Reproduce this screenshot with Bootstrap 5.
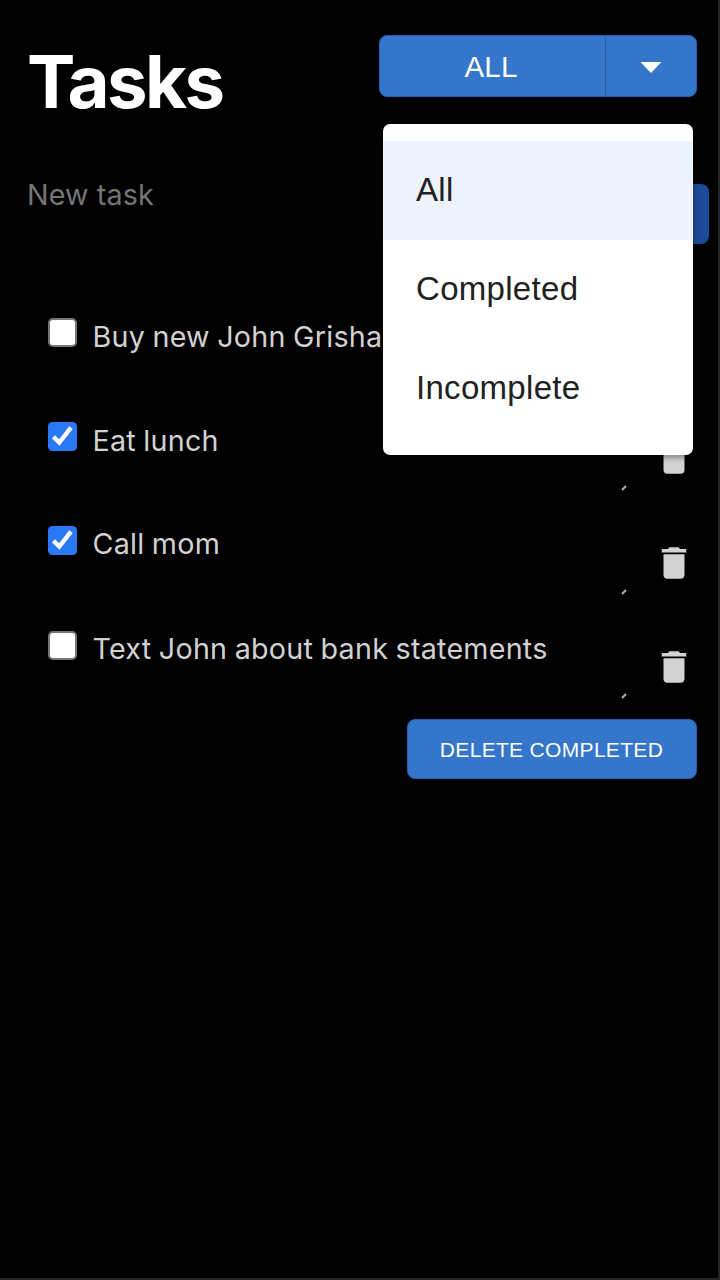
<!DOCTYPE html>
<html lang="en">
<head>
<meta charset="utf-8">
<meta name="viewport" content="width=device-width, initial-scale=1">
<title>Tasks</title>
<link href="https://cdn.jsdelivr.net/npm/bootstrap@5.3.0/dist/css/bootstrap.min.css" rel="stylesheet">
<style>
  body { background: #000; font-family: Inter, "Liberation Sans", sans-serif; }
  .app { height: 1280px; background: #000; border-right: 2px solid #242428; border-bottom: 2px solid #242428; }
  .app-head { height: 160px; padding: 35px 21px 0 27px; }
  .app-title { font-size: 72.5px; font-weight: 650; line-height: 94px; letter-spacing: -2.6px; color: #fff; }
  .btn-task { --bs-btn-color: #fff; --bs-btn-bg: #3575ca; --bs-btn-border-color: #255db2;
    --bs-btn-hover-color: #fff; --bs-btn-hover-bg: #2c67b8; --bs-btn-border-radius: 8px;
    font-family: "Liberation Sans", sans-serif; }
  .filter { width: 318.5px; height: 62px; }
  .filter .btn { font-size: 29.5px; line-height: 1; padding: 1px 2px 0 0; letter-spacing: .1px; }
  .filter .caret-btn.btn { flex: 0 0 92.5px; padding: 2px 0 0 1px; border-radius: 0 8px 8px 0 !important; }
  .filter-menu { display: block; width: 310px; height: 331px; top: 89px; left: 4.5px; padding: 17px 0 0;
    border: 0; border-radius: 7px; background: #fff; box-shadow: 0 3px 5px rgba(0,0,0,.35);
    font-family: "Liberation Sans", sans-serif; overflow: hidden; }
  .filter-menu .dropdown-item { height: 99px; padding: 0 33px; font-size: 33px; line-height: 98px; letter-spacing: .3px; color: #212121; }
  .filter-menu .dropdown-item.active { background: #edf2fb; color: #212121; }
  .new-task { height: 140px; padding: 24px 9px 0 27px; }
  .new-label { font-size: 28.7px; line-height: 22px; letter-spacing: .12px; color: #757575; }
  .add-btn { width: 130px; height: 60px; border: 0; --bs-btn-bg: #1c4998; }
  .task-row { height: 104.2px; padding: 18px 22px 0 47.5px; }
  .check { width: 29px; height: 29px; margin-right: 16px; }
  .task-text { position: relative; width: 536px; height: 73px; font-size: 28.7px; line-height: 37px; letter-spacing: .24px; word-spacing: -.9px; color: #d2d2d2; white-space: nowrap; }
  .task-row:nth-child(n+3) .task-text { line-height: 35.5px; }
  .grip { position: absolute; right: 1.5px; bottom: 4.5px; width: 6px; height: 6px; }
  .trash { width: 42px; height: 42px; margin: 15.2px 0 0 24px; fill: #d2d2d2; }
  .delete-btn { width: 290px; height: 60px; margin: 2.2px 21px 0 0; padding: 2px 1px 0 0; font-size: 21px; letter-spacing: .32px; }
</style>
</head>
<body>
<main class="app d-flex flex-column overflow-hidden">
  <header class="app-head d-flex justify-content-between align-items-start">
    <h1 class="app-title m-0">Tasks</h1>
    <div class="filter btn-group dropdown">
      <button class="btn btn-task flex-grow-1" type="button">ALL</button>
      <button class="btn btn-task caret-btn" type="button" aria-label="Choose filter">
        <svg class="d-block mx-auto" width="22" height="11" viewBox="0 0 22 11"><path d="M.5 0h21L11 11z" fill="#fff"/></svg>
      </button>
      <div class="filter-menu dropdown-menu">
        <a class="dropdown-item active" href="#">All</a>
        <a class="dropdown-item" href="#">Completed</a>
        <a class="dropdown-item" href="#">Incomplete</a>
      </div>
    </div>
  </header>

  <form class="new-task d-flex justify-content-between">
    <span class="new-label">New task</span>
    <button class="add-btn btn btn-task" type="button" aria-label="Add"></button>
  </form>

  <section>
    <div class="task-row d-flex align-items-start">
      <svg class="check" viewBox="0 0 29 29"><rect x="1" y="1" width="27" height="27" rx="4" fill="#fff" stroke="#767676" stroke-width="2"/></svg>
      <div class="task-text">Buy new John Grisham book<svg class="grip" viewBox="0 0 6 6"><path d="M1 5l4-4" stroke="#b0b0b0" stroke-width="2"/></svg></div>
      <svg class="trash" viewBox="0 0 24 24"><path d="M6 19c0 1.1.9 2 2 2h8c1.1 0 2-.9 2-2V7H6v12zM19 4h-3.500l-1-1h-5l-1 1H5v2h14V4z"/></svg>
    </div>
    <div class="task-row d-flex align-items-start">
      <svg class="check" viewBox="0 0 29 29"><rect width="29" height="29" rx="4.500" fill="#2b78f6"/><path d="M5.500 14.700l5.800 5.800L23 5.700" fill="none" stroke="#fff" stroke-width="4.400"/></svg>
      <div class="task-text">Eat lunch<svg class="grip" viewBox="0 0 6 6"><path d="M1 5l4-4" stroke="#b0b0b0" stroke-width="2"/></svg></div>
      <svg class="trash" viewBox="0 0 24 24"><path d="M6 19c0 1.1.9 2 2 2h8c1.1 0 2-.9 2-2V7H6v12zM19 4h-3.500l-1-1h-5l-1 1H5v2h14V4z"/></svg>
    </div>
    <div class="task-row d-flex align-items-start">
      <svg class="check" viewBox="0 0 29 29"><rect width="29" height="29" rx="4.500" fill="#2b78f6"/><path d="M5.500 14.700l5.800 5.800L23 5.700" fill="none" stroke="#fff" stroke-width="4.400"/></svg>
      <div class="task-text">Call mom<svg class="grip" viewBox="0 0 6 6"><path d="M1 5l4-4" stroke="#b0b0b0" stroke-width="2"/></svg></div>
      <svg class="trash" viewBox="0 0 24 24"><path d="M6 19c0 1.1.9 2 2 2h8c1.1 0 2-.9 2-2V7H6v12zM19 4h-3.500l-1-1h-5l-1 1H5v2h14V4z"/></svg>
    </div>
    <div class="task-row d-flex align-items-start">
      <svg class="check" viewBox="0 0 29 29"><rect x="1" y="1" width="27" height="27" rx="4" fill="#fff" stroke="#767676" stroke-width="2"/></svg>
      <div class="task-text">Text John about bank statements<svg class="grip" viewBox="0 0 6 6"><path d="M1 5l4-4" stroke="#b0b0b0" stroke-width="2"/></svg></div>
      <svg class="trash" viewBox="0 0 24 24"><path d="M6 19c0 1.1.9 2 2 2h8c1.1 0 2-.9 2-2V7H6v12zM19 4h-3.500l-1-1h-5l-1 1H5v2h14V4z"/></svg>
    </div>
  </section>
  <button class="delete-btn btn btn-task align-self-end" type="button">DELETE COMPLETED</button>
</main>
<script src="https://cdn.jsdelivr.net/npm/bootstrap@5.3.0/dist/js/bootstrap.bundle.min.js"></script>
</body>
</html>
